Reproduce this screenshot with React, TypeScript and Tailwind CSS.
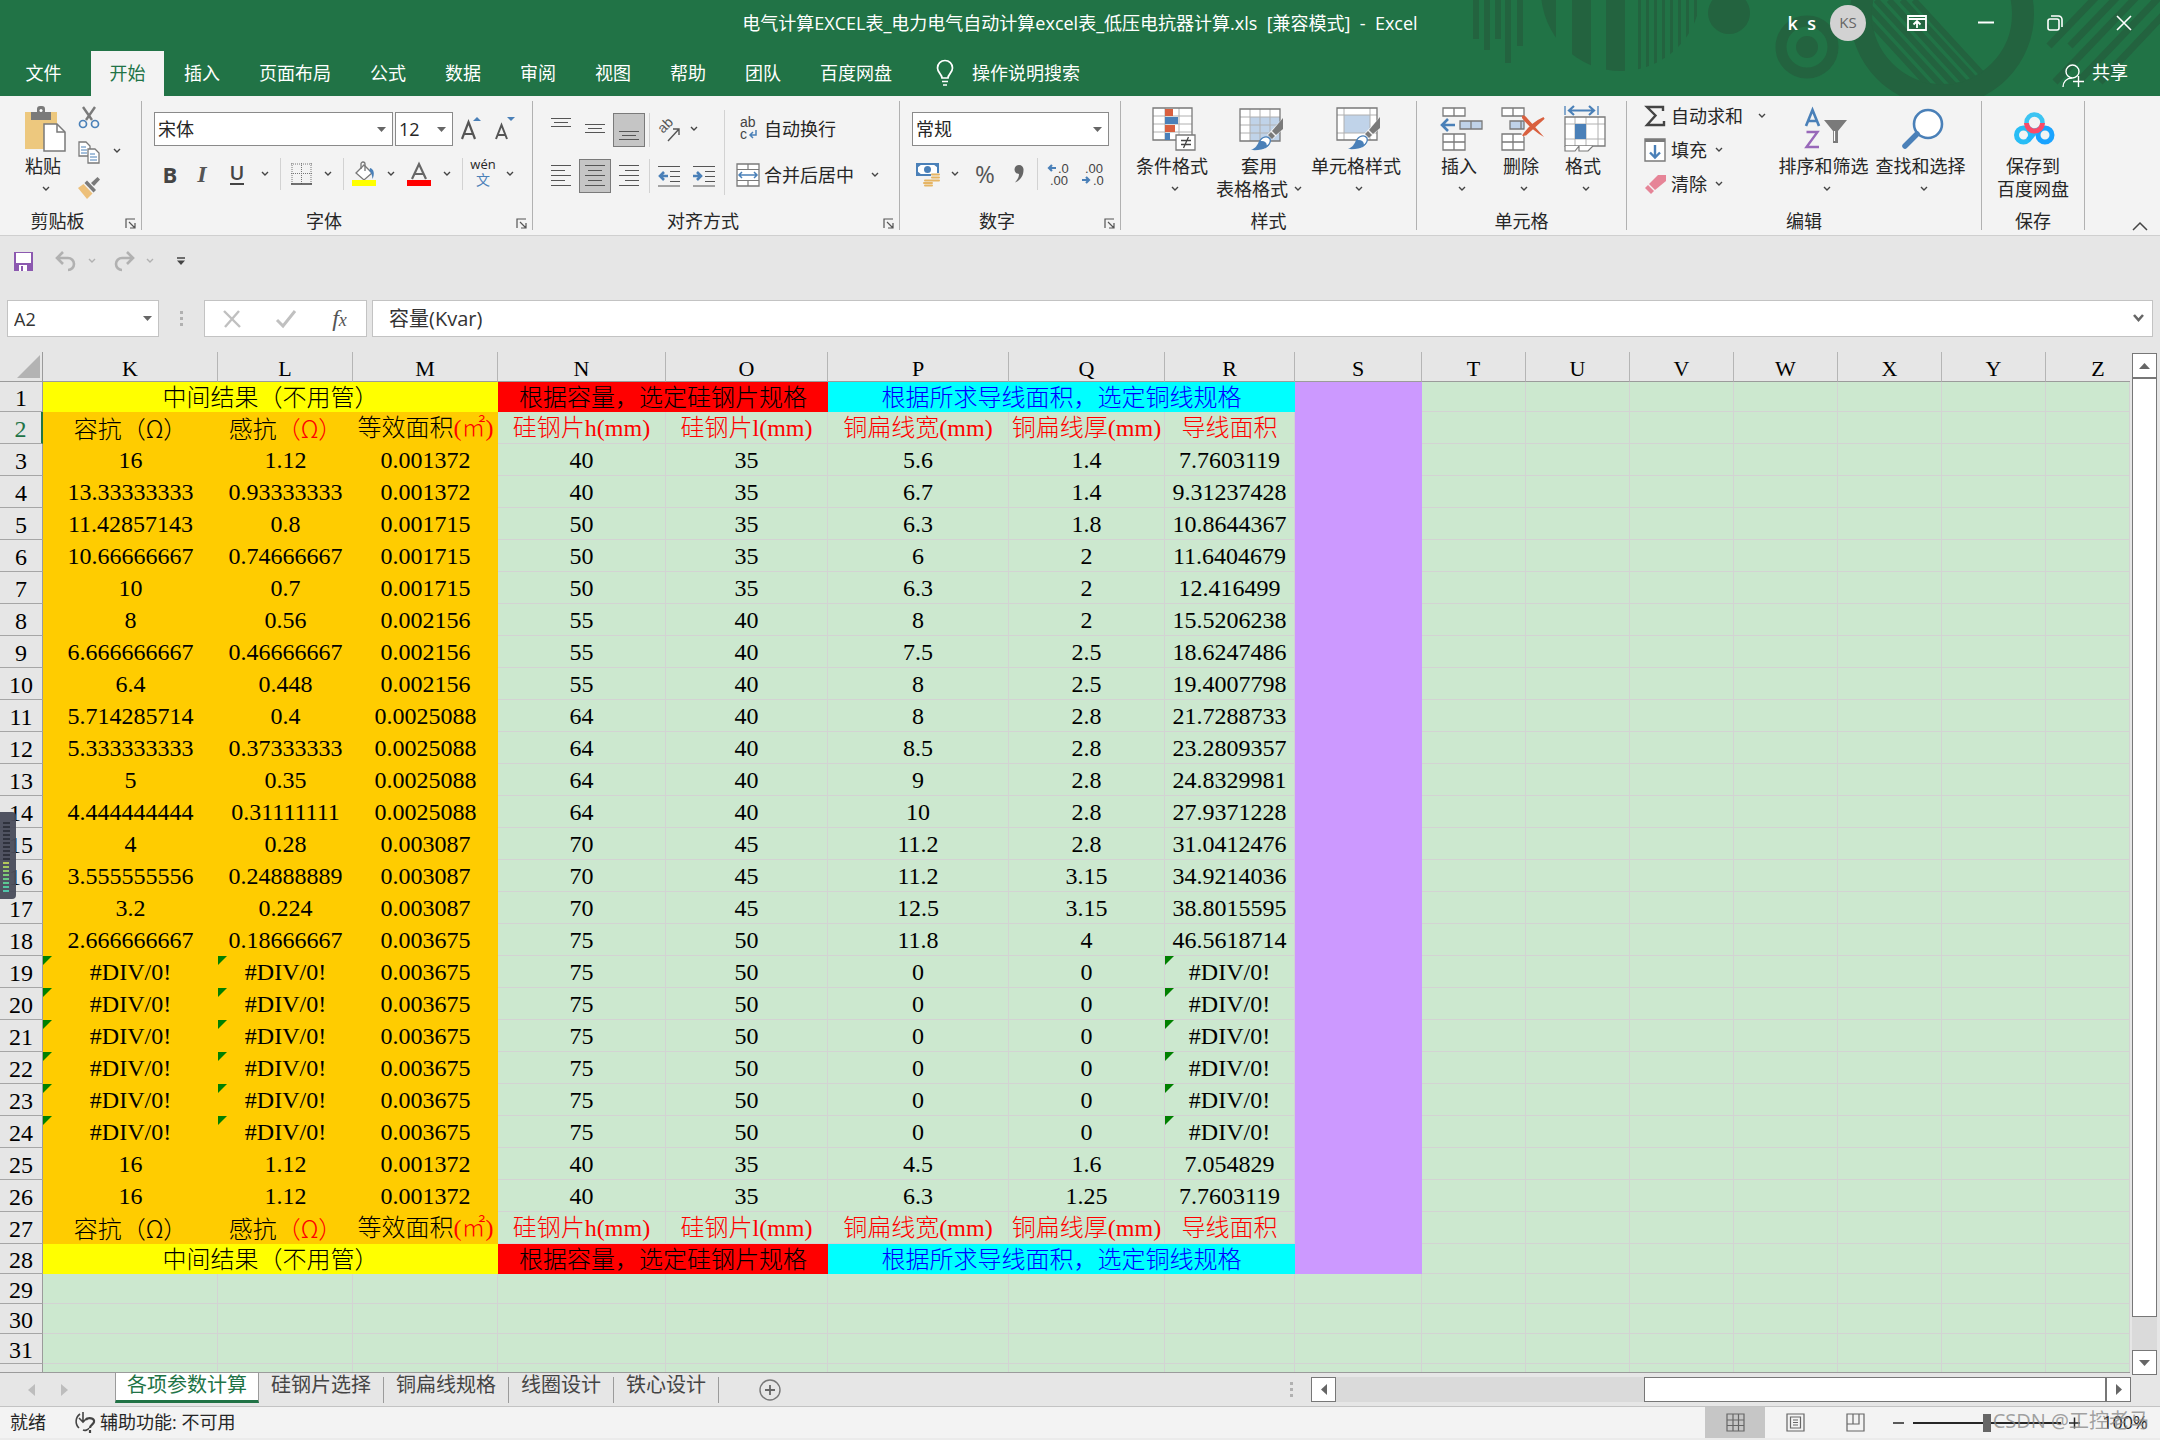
import React from "react";

type Kids = { children?: React.ReactNode };

const UI = "[font-family:'Open_Sans','Noto_Sans_CJK_SC',sans-serif]";
const SERIF = "[font-family:'Liberation_Serif','Noto_Sans_CJK_SC',serif]";
const CJK = "[font-family:'Noto_Sans_CJK_SC',sans-serif]";
const GLYPH = "[font-family:'Liberation_Sans',sans-serif]";

/* ---------- small shared pieces ---------- */

function Svg({ w, h, children, className }: { w: number; h: number; className?: string } & Kids) {
  return (
    <svg width={w} height={h} viewBox={`0 0 ${w} ${h}`} fill="none" aria-hidden="true" className={className ?? "shrink-0 overflow-visible"}>
      {children}
    </svg>
  );
}

function Chevron({ color = "#444" }: { color?: string }) {
  return (
    <Svg w={8} h={6}>
      <path d="M1 1l3 3 3-3" stroke={color} strokeWidth="1.4" />
    </Svg>
  );
}

function ChevronButton({ className = "w-3.5", label, color }: { className?: string; label: string; color?: string }) {
  return (
    <button aria-label={label} className={`flex h-8 shrink-0 items-center justify-center ${className}`}>
      <Chevron color={color} />
    </button>
  );
}

function Caret() {
  return (
    <Svg w={9} h={5} className="pointer-events-none mr-1.5 shrink-0">
      <path d="M0 0h9L4.500 5z" fill="#666" />
    </Svg>
  );
}

function IconButton({ label, className = "w-8", children }: { label: string; className?: string } & Kids) {
  return (
    <button aria-label={label} className={`flex h-full shrink-0 items-center justify-center ${className}`}>
      {children}
    </button>
  );
}

function Rule({ className = "mx-0" }: { className?: string }) {
  return <div className={`h-full w-px shrink-0 bg-[#d2d2d2] ${className}`} />;
}

function Combo({ label, options, className }: { label: string; options: string[]; className: string }) {
  return (
    <div className={`flex h-[34px] shrink-0 items-center border border-[#8a8a8a] bg-white ${className}`}>
      <select aria-label={label} className="h-full min-w-0 flex-1 appearance-none bg-transparent pl-[3px] text-lg leading-7 text-[#262626] outline-none">
        {options.map((o) => (
          <option key={o}>{o}</option>
        ))}
      </select>
      <Caret />
    </div>
  );
}

function Group({ label, className, launcher, children }: { label: string; className: string; launcher?: boolean } & Kids) {
  return (
    <>
      <section aria-label={label} className={`flex shrink-0 flex-col ${className}`}>
        <div className="flex h-28">{children}</div>
        <div className="flex h-[26px] items-center">
          <span className="flex-1 text-center leading-6">{label}</span>
          {launcher && (
            <button aria-label={`${label}设置`} className="flex w-[26px] justify-center pt-1 pl-1">
              <Svg w={11} h={11}>
                <path d="M1 10V1h9M4 4l5.500 5.500M10 5v5H5" stroke="#555" strokeWidth="1.200" />
              </Svg>
            </button>
          )}
        </div>
      </section>
      <div className="my-[5px] w-px shrink-0 bg-[#b1b1b1]" />
    </>
  );
}

function BigButton({ label, second, className, chevron = true, children }: { label: string; second?: string; className: string; chevron?: boolean } & Kids) {
  return (
    <button className={`flex shrink-0 flex-col items-center pt-[9px] ${className}`}>
      <span className="mb-0.5 flex h-12 items-center justify-center pl-1">{children}</span>
      <span className="leading-[23px] whitespace-nowrap">{label}</span>
      <span className={`flex h-[22px] items-center gap-1.5 leading-[22px] whitespace-nowrap ${second ? "" : "pl-1.5"}`}>
        {second}
        {chevron && <Chevron />}
      </span>
    </button>
  );
}

/* ---------- title area ---------- */

function TitleArt() {
  const thin = [1638, 1646, 1654, 1662, 1670, 1678, 1686, 1694];
  return (
    <svg width="700" height="96" viewBox="1460 0 700 96" className="pointer-events-none absolute top-0 right-0" aria-hidden="true">
      <defs>
        <clipPath id="disc">
          <circle cx="1621" cy="-9" r="80" />
        </clipPath>
        <clipPath id="hole">
          <circle cx="1942" cy="14" r="71" />
        </clipPath>
      </defs>
      <g fill="#23633f">
        <path d="M1473 0h6v39h-6zM1484 0h6v50h-6zM1495 0h6v39h-6zM1505 0h6v63h-6zM1517 0h6v46h-6z" />
        <g clipPath="url(#disc)">
          <path d="M1536 0h20v96h-20zM1572 0h19v96h-19zM1606 0h19v96h-19z" />
          {thin.map((x) => (
            <rect key={x} x={x} y="0" width="3" height="96" />
          ))}
        </g>
        <circle cx="1729" cy="13" r="21" />
        <circle cx="1807" cy="47" r="11" />
      </g>
      <g fill="none" stroke="#23633f">
        <circle cx="1807" cy="47" r="26" strokeWidth="11" />
        <circle cx="1942" cy="14" r="81" strokeWidth="22" />
        <g clipPath="url(#hole)" strokeWidth="6">
          <path d="M1850 0l90 98M1863 0l90 98M1876 0l90 98M1889 0l90 98M1902 0l90 98M1914 0l90 98" />
        </g>
        <path d="M2049 46l50-52M2070 46l50-52M2055 82l90-94M2078 82l88-92M2100 82l66-70" strokeWidth="7" />
      </g>
    </svg>
  );
}

const MENU_AFTER = ["插入", "页面布局", "公式", "数据", "审阅", "视图", "帮助", "团队", "百度网盘"];

function Header() {
  return (
    <header className="relative shrink-0 bg-[#217346] text-white">
      <TitleArt />
      <div className="relative grid h-[51px] grid-cols-[1fr_auto_1fr] items-center pb-1.5">
        <div />
        <h1 className="text-lg leading-6 whitespace-pre">电气计算EXCEL表_电力电气自动计算excel表_低压电抗器计算.xls&nbsp; [兼容模式]&nbsp; -&nbsp; Excel</h1>
        <div className="flex items-center justify-end pr-0.5">
          <span className="mr-3.5 text-lg leading-6 font-semibold whitespace-pre">k&nbsp; s</span>
          <button aria-label="帐户" className="mr-4 flex size-9 items-center justify-center rounded-full bg-[#d2d2d2] text-[15px] text-[#666]">KS</button>
          <button aria-label="功能区显示选项" className="flex w-[69px] justify-center">
            <Svg w={20} h={16}>
              <path d="M1 1h18v14H1zM1 4h18M10 13V6M6.500 9.500L10 6l3.500 3.500" stroke="#fff" strokeWidth="1.800" />
            </Svg>
          </button>
          <button aria-label="最小化" className="flex w-[69px] justify-center">
            <Svg w={16} h={16}>
              <path d="M0 7.500h16" stroke="#fff" strokeWidth="2" />
            </Svg>
          </button>
          <button aria-label="还原" className="flex w-[69px] justify-center">
            <Svg w={16} h={16}>
              <rect x="1" y="4" width="11" height="11" rx="2" stroke="#fff" strokeWidth="1.600" />
              <path d="M4 1h7.500a3.500 3.500 0 013.500 3.500V12" stroke="#fff" strokeWidth="1.600" />
            </Svg>
          </button>
          <button aria-label="关闭" className="flex w-[69px] justify-center">
            <Svg w={16} h={16}>
              <path d="M1 1l14 14M15 1L1 15" stroke="#fff" strokeWidth="1.600" />
            </Svg>
          </button>
        </div>
      </div>
      <nav className="relative flex h-[45px] items-stretch gap-px text-lg leading-6">
        <button className="w-[90px] pr-[3px] pb-0.5">文件</button>
        <button className="w-[73px] bg-[#f3f3f3] pb-0.5 text-[#217346]">开始</button>
        {MENU_AFTER.map((m) => (
          <button key={m} className="px-[19px] pb-0.5">{m}</button>
        ))}
        <button className="ml-6 flex items-center gap-[18px] pb-0.5">
          <Svg w={18} h={26}>
            <path d="M6 18c0-4-4.500-5-4.500-10a7.500 7.500 0 0115 0c0 5-4.500 6-4.500 10zM6 21.500h6M7 25h4" stroke="#fff" strokeWidth="1.700" />
          </Svg>
          操作说明搜索
        </button>
        <button className="mr-8 ml-auto flex items-center gap-2 pb-1">
          <Svg w={22} h={24} className="mt-2 shrink-0">
            <circle cx="10.500" cy="7.500" r="6.500" stroke="#fff" strokeWidth="1.400" />
            <path d="M1 23c0-5 3.500-9 9-9M16.500 12v11M11 17.500h11" stroke="#fff" strokeWidth="1.400" />
          </Svg>
          共享
        </button>
      </nav>
    </header>
  );
}

/* ---------- ribbon icons ---------- */

const G = "#7a7a7a";
const B = "#4a80b8";

function PasteIcon() {
  return (
    <Svg w={42} h={46}>
      <path d="M1 6h32v37H1z" fill="#edc87e" />
      <path d="M7 6h6V3a3 3 0 013-3h2a3 3 0 013 3v3h6v8H7z" fill="#7a7a7a" />
      <circle cx="17" cy="4.500" r="1.500" fill="#fff" />
      <path d="M20 18h13l8 8v19H20z" fill="#fff" stroke={G} strokeWidth="1.500" />
      <path d="M33 18v8h8" stroke={G} strokeWidth="1.500" />
    </Svg>
  );
}

function ScissorsIcon() {
  return (
    <Svg w={22} h={23}>
      <path d="M5 1l9 13M17 1L8 14" stroke={G} strokeWidth="2.400" />
      <circle cx="5" cy="18" r="3.500" stroke={B} strokeWidth="1.700" />
      <circle cx="17" cy="18" r="3.500" stroke={B} strokeWidth="1.700" />
    </Svg>
  );
}

function CopyIcon() {
  return (
    <Svg w={22} h={23}>
      <path d="M1 1h7l4 4v10H1z" fill="#fff" stroke={G} strokeWidth="1.300" />
      <path d="M3 6h5M3 9h6M3 12h6" stroke={B} />
      <path d="M10 8h7l4 4v10H10z" fill="#fff" stroke={G} strokeWidth="1.300" />
      <path d="M12 13h5M12 16h7M12 19h7" stroke={B} />
    </Svg>
  );
}

function PainterIcon() {
  return (
    <Svg w={24} h={22}>
      <path d="M23 2.500L20.500 0 14 6l3 3z" fill={G} />
      <path d="M10 3.500l9 9.500-2.500 2.500L7.500 6z" fill={G} />
      <path d="M6.500 7l9 9.500L10 22 1 11z" fill="#edc07a" />
    </Svg>
  );
}

function Lines({ rows, w = 22, h = 24 }: { rows: [number, number, number][]; w?: number; h?: number }) {
  return (
    <Svg w={w} h={h}>
      {rows.map(([x, y, len], i) => (
        <rect key={i} x={x} y={y} width={len} height="1" fill="#555" />
      ))}
    </Svg>
  );
}

function BrushTip({ x, y }: { x: number; y: number }) {
  return (
    <g transform={`translate(${x} ${y})`}>
      <path d="M33 -1v11L22 21l-6-4z" fill="#f3f3f3" />
      <path d="M32 0v11l-7 6-4-4z" fill="#7a7a7a" />
      <path d="M20 14l4 4-3 3-4-4z" fill="#7a7a7a" />
      <path d="M0 32c5-2 6-5 8-8 2.500-5 9-5 10.500-1C20 29 12 33 0 32z" fill={B} />
      <path d="M8.500 24c2-5.500 8-6.500 10.500-3 1 3-1 6-4 8 1-4-2-6-6.500-5z" fill="#fff" stroke={B} strokeWidth="1.300" />
    </g>
  );
}

function ConditionalIcon() {
  return (
    <Svg w={44} h={44}>
      <path d="M1 1h39v32H1z" fill="#fff" />
      <path d="M1 9h39M1 17h39M1 25h39M13 1v32M27 1v32" stroke="#b0b0b0" />
      <path d="M1 1h39v32H1z" stroke={G} strokeWidth="1.300" />
      <path d="M13 2h8v7h-8zM13 18h10v7H13z" fill="#d9603f" />
      <path d="M13 10h13v7H13zM13 26h5v7h-5z" fill={B} />
      <path d="M24 28h19v15H24z" fill="#fff" stroke={G} strokeWidth="1.300" />
      <path d="M29 33.500h10M29 37.500h10M36.500 30l-5 11" stroke="#444" strokeWidth="1.300" />
    </Svg>
  );
}

function TableStyleIcon() {
  return (
    <Svg w={45} h={44}>
      <path d="M1 2h40v32H1z" fill="#fff" />
      <path d="M11 10h30v24H11z" fill="#c0d3e9" />
      <path d="M1 10h40M1 18h40M1 26h40M11 2v32M21 2v32M31 2v32" stroke="#b0b0b0" />
      <path d="M1 2h40v32H1z" stroke={G} strokeWidth="1.300" />
      <BrushTip x={12} y={11} />
    </Svg>
  );
}

function CellStyleIcon() {
  return (
    <Svg w={45} h={44}>
      <path d="M1 1h40v32H1z" fill="#fff" />
      <path d="M8 8h26v18H8z" fill="#c0d3e9" />
      <path d="M1 8h40M1 26h40M8 1v32M34 1v32" stroke="#b0b0b0" />
      <path d="M1 1h40v32H1z" stroke={G} strokeWidth="1.300" />
      <BrushTip x={12} y={10} />
    </Svg>
  );
}

function InsertIcon() {
  return (
    <Svg w={44} h={44}>
      <path d="M4 1h22v8H4zM15 1v8M4 27h22v16H4zM15 27v16M4 35h22" fill="#fff" stroke={G} strokeWidth="1.300" />
      <path d="M21 14h22v8H21zM32 14v8" fill="#c0d3e9" stroke={G} strokeWidth="1.300" />
      <path d="M16 18H3M9 12l-6 6 6 6" stroke={B} strokeWidth="2.600" />
    </Svg>
  );
}

function DeleteIcon() {
  return (
    <Svg w={44} h={44}>
      <path d="M1 1h22v8H1zM12 1v8M1 27h22v16H1zM12 27v16M1 35h22" fill="#fff" stroke={G} strokeWidth="1.300" />
      <path d="M9 14h14v8H9zM20 14v8" fill="#c0d3e9" stroke={G} strokeWidth="1.300" />
      <path d="M21 9l6 1 6 6 9-6-6 9 7 11-10-8-8 9-5-4 7-8z" fill="#f3f3f3" />
      <path d="M21 9c2-1 4 0 5 2l17 19C36 26 27 19 21 11z" fill="#d9603f" />
      <path d="M43 11C34 15 28 20 22 29M24 28L43 11" stroke="#d9603f" strokeWidth="2.200" />
    </Svg>
  );
}

function FormatIcon() {
  return (
    <Svg w={42} h={46}>
      <path d="M1 0v9M34 0v9" stroke={B} strokeWidth="1.300" />
      <path d="M6 4.500h23M10 0L5 4.500 10 9M25 0l5 4.500L25 9" stroke={B} strokeWidth="2.200" />
      <path d="M1 11h40v29H1z" fill="#fff" />
      <path d="M1 18h40M1 33h40M11 11v29M22 11v29M34 11v29" stroke="#b0b0b0" />
      <path d="M11 18h11v15H11z" fill={B} />
      <path d="M1 11h40v29H1z" stroke={G} strokeWidth="1.300" />
      <path d="M1 40v5h10l4-5M15 40v5h9l5-5" stroke={G} strokeWidth="1.200" fill="#fff" />
    </Svg>
  );
}

function SortIcon() {
  return (
    <Svg w={44} h={44}>
      <path d="M2 19L8.500 3 15 19M4.500 14h8" stroke={B} strokeWidth="2.600" />
      <path d="M2.500 25h11L2.500 40H15" stroke="#9868b9" strokeWidth="2.400" />
      <path d="M20 13h23L34 24v12h-5V24z" fill={G} />
      <path d="M30.500 24v10" stroke="#fff" strokeWidth="1.200" />
    </Svg>
  );
}

function FindIcon() {
  return (
    <Svg w={42} h={42}>
      <circle cx="26" cy="16" r="14" fill="#fff" stroke={B} strokeWidth="2.600" />
      <path d="M15 26L3 38" stroke={B} strokeWidth="5.500" strokeLinecap="round" />
    </Svg>
  );
}

function CloudDiskIcon() {
  return (
    <Svg w={42} h={36}>
      <circle cx="9.500" cy="24" r="7" stroke="#28bdf5" strokeWidth="5" />
      <circle cx="31" cy="24" r="7" stroke="#1aa3ff" strokeWidth="5" />
      <path d="M14 29c5-4 6-9 12-11" stroke="#22b4fa" strokeWidth="5" />
      <circle cx="20.500" cy="11.500" r="8" fill="#f3f3f3" stroke="#3cc4f2" strokeWidth="4.500" />
      <path d="M12.500 12a8 8 0 0016 0" stroke="#fb4a68" strokeWidth="5" />
    </Svg>
  );
}

/* ---------- ribbon ---------- */

function ClipboardGroup() {
  return (
    <Group label="剪贴板" className="w-[141px]" launcher>
      <BigButton label="粘贴" className="ml-3 w-[62px]">
        <PasteIcon />
      </BigButton>
      <div className="flex flex-col pt-1 pl-[3px]">
        <div className="flex h-[35px]">
          <IconButton label="剪切" className="w-6"><ScissorsIcon /></IconButton>
        </div>
        <div className="flex h-[35px] gap-[9px]">
          <IconButton label="复制" className="w-6"><CopyIcon /></IconButton>
          <ChevronButton label="复制选项" />
        </div>
        <div className="flex h-[35px]">
          <IconButton label="格式刷" className="w-6"><PainterIcon /></IconButton>
        </div>
      </div>
    </Group>
  );
}

function FontGroup() {
  return (
    <Group label="字体" className="w-[390px]" launcher>
      <div className="flex flex-col gap-3 pt-4 pl-3">
        <div className="flex h-[34px]">
          <Combo label="字体名称" options={["宋体", "黑体"]} className="mr-0.5 w-[239px]" />
          <Combo label="字号" options={["12", "14"]} className="mr-px w-[58px]" />
          <IconButton label="增大字号" className="w-[34px]">
            <Svg w={20} h={24}>
              <path d="M1 22L7.500 5 14 22M3.500 17h8" stroke="#555" strokeWidth="2.200" />
              <path d="M12 4l4-4 4 4z" fill={B} />
            </Svg>
          </IconButton>
          <IconButton label="减小字号" className="w-[34px]">
            <Svg w={20} h={24}>
              <path d="M1 22L6.500 8 12 22M3 18h7" stroke="#555" strokeWidth="2" />
              <path d="M12 0h8l-4 4z" fill={B} />
            </Svg>
          </IconButton>
        </div>
        <div className="flex h-8">
          <IconButton label="加粗"><b className="text-[22px] leading-7 text-[#444]">B</b></IconButton>
          <IconButton label="倾斜"><i className={`text-2xl leading-7 font-bold text-[#555] ${SERIF}`}>I</i></IconButton>
          <IconButton label="下划线" className="w-[38px]"><span className="border-b-2 border-[#444] text-xl leading-5 font-semibold text-[#444]">U</span></IconButton>
          <ChevronButton label="下划线选项" className="mr-1.5 w-[18px]" />
          <Rule />
          <IconButton label="边框" className="w-10">
            <Svg w={21} h={22}>
              <path d="M0 1h21M0 10.500h21M1 0v21M10.500 0v21M20 0v21" stroke="#777" strokeDasharray="1 1" />
              <path d="M0 21h21" stroke="#444" strokeWidth="1.500" />
            </Svg>
          </IconButton>
          <ChevronButton label="边框选项" className="mr-2 w-3.5" />
          <Rule />
          <IconButton label="填充颜色" className="w-10">
            <Svg w={24} h={24}>
              <path d="M4 11l8-8 8 8-8 7z" fill="#fff" stroke="#777" strokeWidth="1.300" />
              <path d="M9 7V2a2 2 0 014 0v7" stroke="#777" strokeWidth="1.300" />
              <path d="M18 6c4 1 5 6 2.500 11-.5-4-1-6-3-8z" fill={B} />
              <path d="M0 18h24v6H0z" fill="#ff0" />
            </Svg>
          </IconButton>
          <ChevronButton label="填充颜色选项" />
          <IconButton label="字体颜色" className="w-[42px]">
            <Svg w={24} h={24}>
              <path d="M5 17L12 2l7 15M8 12h8" stroke="#666" strokeWidth="2.200" />
              <path d="M0 18h24v6H0z" fill="red" />
            </Svg>
          </IconButton>
          <ChevronButton label="字体颜色选项" className="mr-2 w-3.5" />
          <Rule />
          <button aria-label="拼音" className="flex w-10 flex-col items-center justify-center">
            <span className="text-[13px] leading-3">wén</span>
            <span className="text-sm leading-5 text-[#4a80b8]">文</span>
          </button>
          <ChevronButton label="拼音选项" />
        </div>
      </div>
    </Group>
  );
}

function AlignGroup() {
  const on = "w-8 border border-[#7a7a7a] bg-[#c5c5c5]";
  return (
    <Group label="对齐方式" className="w-[366px]" launcher>
      <div className="flex flex-col gap-3 pt-[17px] pl-3">
        <div className="flex h-[34px] gap-0.5">
          <IconButton label="顶端对齐"><Lines rows={[[1, 0, 20], [4, 4, 14], [1, 8, 20]]} h={24} /></IconButton>
          <IconButton label="垂直居中"><Lines rows={[[1, 6, 20], [4, 10, 14], [1, 14, 20]]} h={24} /></IconButton>
          <IconButton label="底端对齐" className={on}><Lines rows={[[1, 13, 20], [4, 17, 14], [1, 21, 20]]} h={24} /></IconButton>
          <Rule className="ml-0.5" />
          <IconButton label="方向" className="w-9">
            <Svg w={22} h={22}>
              <text x="4" y="15" transform="rotate(-45 4 15)" fontSize="14" fill="#555" className={GLYPH}>ab</text>
              <path d="M9 22L20 10M14 10h6v6" stroke="#555" strokeWidth="1.400" />
            </Svg>
          </IconButton>
          <ChevronButton label="方向选项" className="w-2" />
        </div>
        <div className="flex h-[34px] gap-0.5">
          <IconButton label="左对齐"><Lines rows={[[1, 1, 20], [1, 6, 14], [1, 11, 20], [1, 16, 14], [1, 21, 20]]} /></IconButton>
          <IconButton label="居中" className={on}><Lines rows={[[1, 1, 20], [4, 6, 14], [1, 11, 20], [4, 16, 14], [1, 21, 20]]} /></IconButton>
          <IconButton label="右对齐"><Lines rows={[[1, 1, 20], [7, 6, 14], [1, 11, 20], [7, 16, 14], [1, 21, 20]]} /></IconButton>
          <Rule className="ml-0.5" />
          <IconButton label="减少缩进量" className="w-[34px]">
            <Svg w={22} h={22}>
              <path d="M0 1.500h22M12 6.500h10M12 11.500h10M12 16.500h10M0 21h22" stroke="#555" />
              <path d="M10 11H2M6 7l-4 4 4 4" stroke={B} strokeWidth="2.600" />
            </Svg>
          </IconButton>
          <IconButton label="增加缩进量" className="w-8">
            <Svg w={22} h={22}>
              <path d="M0 1.500h22M12 6.500h10M12 11.500h10M12 16.500h10M0 21h22" stroke="#555" />
              <path d="M0 11h8M4 7l4 4-4 4" stroke={B} strokeWidth="2.600" />
            </Svg>
          </IconButton>
        </div>
      </div>
      <div className="mt-3.5 mr-2 ml-1 h-[85px] w-px bg-[#d2d2d2]" />
      <div className="flex flex-col gap-3 pt-4">
        <button className="flex h-[34px] items-center gap-[3px] whitespace-nowrap">
          <Svg w={28} h={24}>
            <text x="7" y="10" fontSize="14" fill="#444" className={GLYPH}>ab</text>
            <text x="7" y="22" fontSize="14" fill="#444" className={GLYPH}>c</text>
            <path d="M23 13v5h-6M20 15l-3 3 3 3" stroke={B} strokeWidth="1.500" />
          </Svg>
          自动换行
        </button>
        <div className="flex h-[34px] items-center">
          <button className="mr-3.5 flex items-center gap-[3px] whitespace-nowrap">
            <Svg w={28} h={24}>
              <path d="M4 1h22v22H4z" fill="#fff" stroke={G} strokeWidth="1.300" />
              <path d="M4 6.500h22M4 17.500h22M15 1v5M15 18v5" stroke={G} strokeWidth="1.200" />
              <path d="M6 12h18M9 9l-3 3 3 3M21 9l3 3-3 3" stroke={B} strokeWidth="1.500" />
            </Svg>
            合并后居中
          </button>
          <ChevronButton label="合并选项" />
        </div>
      </div>
    </Group>
  );
}

function NumberGroup() {
  return (
    <Group label="数字" className="w-[220px]" launcher>
      <div className="flex flex-col gap-3 pt-4 pl-3">
        <Combo label="数字格式" options={["常规", "数值"]} className="w-[197px]" />
        <div className="flex h-8">
          <IconButton label="会计数字格式">
            <Svg w={24} h={24}>
              <path d="M1 2h21v11H1z" fill="#fff" stroke={B} strokeWidth="2" />
              <path d="M1 2h5L1 6zM22 2h-5l5 4zM1 13h5l-5-4z" fill={B} />
              <circle cx="11.500" cy="7.500" r="3.500" fill={B} />
              <path d="M15 11h9v9h-6v4H8v-6h7z" fill="#f3f3f3" />
              <path d="M16 12.500h7M16 15.500h7M15 18.500h8M9 18.500h8M8 21h8M9 23.500h7" stroke="#e6b564" strokeWidth="2" strokeLinecap="round" />
            </Svg>
          </IconButton>
          <ChevronButton label="会计数字格式选项" className="w-[22px]" />
          <IconButton label="百分比样式" className="w-[38px]"><span className="text-2xl leading-7 text-[#555]">%</span></IconButton>
          <IconButton label="千位分隔样式" className="w-[29px]">
            <Svg w={10} h={18}>
              <path d="M5 0a4.500 4.500 0 014.500 5C9.500 11 6 15.500 1 17.500c2.500-3 4-5 4-8.500a4.500 4.500 0 010-9z" fill="#666" />
            </Svg>
          </IconButton>
          <Rule className="ml-1" />
          <IconButton label="增加小数位数" className="w-10">
            <Svg w={24} h={24}>
              <text x="12" y="11" fontSize="13" fill="#444" className={GLYPH}>.0</text>
              <text x="4" y="23" fontSize="13" fill="#444" className={GLYPH}>.00</text>
              <path d="M10 6H3M6 3L3 6l3 3" stroke={B} strokeWidth="2.200" />
            </Svg>
          </IconButton>
          <IconButton label="减少小数位数" className="w-[30px]">
            <Svg w={24} h={24}>
              <text x="4" y="11" fontSize="13" fill="#444" className={GLYPH}>.00</text>
              <text x="12" y="23" fontSize="13" fill="#444" className={GLYPH}>.0</text>
              <path d="M1 18h7M5 15l3 3-3 3" stroke={B} strokeWidth="2.200" />
            </Svg>
          </IconButton>
        </div>
      </div>
    </Group>
  );
}

function EditGroup() {
  return (
    <Group label="编辑" className="w-[354px]">
      <div className="flex w-[148px] flex-col pt-[3px] pl-3.5">
        <div className="flex h-[34px] items-center">
          <button className="mr-3 flex items-center gap-0.5 whitespace-nowrap">
            <Svg w={28} h={24}>
              <path d="M22 7V3H6l8.500 8.500L6 21h17v-4" stroke="#444" strokeWidth="2.400" />
            </Svg>
            自动求和
          </button>
          <ChevronButton label="求和选项" />
        </div>
        <button className="flex h-[34px] items-center gap-0.5 whitespace-nowrap">
          <Svg w={28} h={24}>
            <path d="M4 1h20v22H4z" fill="#fff" stroke={G} strokeWidth="1.400" />
            <path d="M4 1h20v3H4z" fill={G} />
            <path d="M14 7v13M9 14.500l5 5 5-5" stroke={B} strokeWidth="2.400" />
          </Svg>
          <span className="mr-1.5">填充</span>
          <Chevron />
        </button>
        <button className="flex h-[34px] items-center gap-0.5 whitespace-nowrap">
          <Svg w={28} h={24}>
            <path d="M17 3l8 0v6L14 18l-6-6z" fill="#e68497" />
            <path d="M7 13l6 6-3 3-6-6z" fill="#e68497" />
          </Svg>
          <span className="mr-1.5">清除</span>
          <Chevron />
        </button>
      </div>
      <BigButton label="排序和筛选" className="w-[97px]"><SortIcon /></BigButton>
      <BigButton label="查找和选择" className="w-[97px]"><FindIcon /></BigButton>
    </Group>
  );
}

function Ribbon() {
  return (
    <div className="flex h-[140px] shrink-0 border-b border-[#cfcfcf] bg-[#f3f3f3] text-lg leading-6 text-[#262626]">
      <ClipboardGroup />
      <FontGroup />
      <AlignGroup />
      <NumberGroup />
      <Group label="样式" className="w-[295px]">
        <BigButton label="条件格式" className="ml-[9px] w-[84px]"><ConditionalIcon /></BigButton>
        <BigButton label="套用" second="表格格式" className="w-[90px]"><TableStyleIcon /></BigButton>
        <BigButton label="单元格样式" className="w-[104px]"><CellStyleIcon /></BigButton>
      </Group>
      <Group label="单元格" className="w-[209px]">
        <BigButton label="插入" className="ml-[11px] w-[62px]"><InsertIcon /></BigButton>
        <BigButton label="删除" className="w-[62px]"><DeleteIcon /></BigButton>
        <BigButton label="格式" className="w-[62px]"><FormatIcon /></BigButton>
      </Group>
      <EditGroup />
      <Group label="保存" className="w-[102px]">
        <BigButton label="保存到" second="百度网盘" className="w-full" chevron={false}><CloudDiskIcon /></BigButton>
      </Group>
      <button aria-label="折叠功能区" className="mt-auto mr-3 mb-1 ml-auto">
        <Svg w={16} h={9}>
          <path d="M1 8l7-7 7 7" stroke="#444" strokeWidth="1.500" />
        </Svg>
      </button>
    </div>
  );
}

/* ---------- quick access and formula bar ---------- */

function QuickAccess() {
  return (
    <div className="flex h-[50px] shrink-0 items-center pl-3.5">
      <button aria-label="保存">
        <Svg w={19} h={19}>
          <path d="M0 0h19v19H0z" fill="#8c59b0" />
          <path d="M2 1h15v10H2zM5 13h8v6H5z" fill="#fff" />
          <path d="M7 14h2v5H7z" fill="#8c59b0" />
        </Svg>
      </button>
      <button aria-label="撤消" className="ml-[22px]">
        <Svg w={22} h={20}>
          <path d="M2 7h11a6 6 0 010 12M8 1L2 7l6 6" stroke="#b1b1b1" strokeWidth="2.600" />
        </Svg>
      </button>
      <ChevronButton label="撤消选项" className="ml-2 w-3.5" color="#b1b1b1" />
      <button aria-label="恢复" className="ml-3.5">
        <Svg w={22} h={20}>
          <path d="M20 7H9a6 6 0 000 12M14 1l6 6-6 6" stroke="#b1b1b1" strokeWidth="2.600" />
        </Svg>
      </button>
      <ChevronButton label="恢复选项" className="ml-2 w-3.5" color="#b1b1b1" />
      <button aria-label="自定义快速访问工具栏" className="ml-5">
        <Svg w={8} h={8}>
          <path d="M0 1h8" stroke="#444" strokeWidth="1.500" />
          <path d="M0 3.500h8L4 8z" fill="#444" />
        </Svg>
      </button>
    </div>
  );
}

function FormulaBar() {
  return (
    <div className="mt-3.5 flex h-[37px] shrink-0 pr-[7px] pl-[7px]">
      <div className="flex w-[152px] items-center border border-[#c3c3c3] bg-white">
        <input aria-label="名称框" defaultValue="A2" className="min-w-0 flex-1 bg-transparent pl-1.5 text-lg text-[#333] outline-none" />
        <Caret />
      </div>
      <div className="flex w-[45px] items-center justify-center">
        <Svg w={3} h={16}>
          <path d="M0 0h3v3H0zM0 6h3v3H0zM0 12h3v3H0z" fill="#b1b1b1" />
        </Svg>
      </div>
      <div className="mr-[5px] flex w-[163px] items-center border border-[#c3c3c3] bg-white">
        <IconButton label="取消" className="w-[54px]">
          <Svg w={18} h={18}>
            <path d="M1 1l16 16M16 1L2 17" stroke="#c0c0c0" strokeWidth="2.400" />
          </Svg>
        </IconButton>
        <IconButton label="输入" className="w-[54px]">
          <Svg w={20} h={18}>
            <path d="M1 10l6 6L19 1" stroke="#c0c0c0" strokeWidth="3" />
          </Svg>
        </IconButton>
        <IconButton label="插入函数" className="w-[53px]">
          <i className={`text-2xl leading-7 text-[#555] ${SERIF}`}>f<span className="text-lg">x</span></i>
        </IconButton>
      </div>
      <div className="flex flex-1 items-center border border-[#c3c3c3] bg-white">
        <input aria-label="编辑栏" defaultValue="容量(Kvar)" className="min-w-0 flex-1 bg-transparent pl-4 text-xl text-[#333] outline-none" />
        <button aria-label="展开编辑栏" className="mr-2">
          <Svg w={11} h={9}>
            <path d="M1 1l4.500 5L10 1" stroke="#666" strokeWidth="2.600" />
          </Svg>
        </button>
      </div>
    </div>
  );
}

/* ---------- sheet ---------- */

const DIV = "#DIV/0!";

const DATA: string[][] = [
  ["16", "1.12", "0.001372", "40", "35", "5.6", "1.4", "7.7603119"],
  ["13.33333333", "0.93333333", "0.001372", "40", "35", "6.7", "1.4", "9.31237428"],
  ["11.42857143", "0.8", "0.001715", "50", "35", "6.3", "1.8", "10.8644367"],
  ["10.66666667", "0.74666667", "0.001715", "50", "35", "6", "2", "11.6404679"],
  ["10", "0.7", "0.001715", "50", "35", "6.3", "2", "12.416499"],
  ["8", "0.56", "0.002156", "55", "40", "8", "2", "15.5206238"],
  ["6.666666667", "0.46666667", "0.002156", "55", "40", "7.5", "2.5", "18.6247486"],
  ["6.4", "0.448", "0.002156", "55", "40", "8", "2.5", "19.4007798"],
  ["5.714285714", "0.4", "0.0025088", "64", "40", "8", "2.8", "21.7288733"],
  ["5.333333333", "0.37333333", "0.0025088", "64", "40", "8.5", "2.8", "23.2809357"],
  ["5", "0.35", "0.0025088", "64", "40", "9", "2.8", "24.8329981"],
  ["4.444444444", "0.31111111", "0.0025088", "64", "40", "10", "2.8", "27.9371228"],
  ["4", "0.28", "0.003087", "70", "45", "11.2", "2.8", "31.0412476"],
  ["3.555555556", "0.24888889", "0.003087", "70", "45", "11.2", "3.15", "34.9214036"],
  ["3.2", "0.224", "0.003087", "70", "45", "12.5", "3.15", "38.8015595"],
  ["2.666666667", "0.18666667", "0.003675", "75", "50", "11.8", "4", "46.5618714"],
  [DIV, DIV, "0.003675", "75", "50", "0", "0", DIV],
  [DIV, DIV, "0.003675", "75", "50", "0", "0", DIV],
  [DIV, DIV, "0.003675", "75", "50", "0", "0", DIV],
  [DIV, DIV, "0.003675", "75", "50", "0", "0", DIV],
  [DIV, DIV, "0.003675", "75", "50", "0", "0", DIV],
  [DIV, DIV, "0.003675", "75", "50", "0", "0", DIV],
  ["16", "1.12", "0.001372", "40", "35", "4.5", "1.6", "7.054829"],
  ["16", "1.12", "0.001372", "40", "35", "6.3", "1.25", "7.7603119"],
];

const COLUMNS = ["K", "L", "M", "N", "O", "P", "Q", "R", "S", "T", "U", "V", "W", "X", "Y"];
const COL_WIDTHS = [
  "w-[175px]", "w-[135px]", "w-[145px]", "w-[168px]", "w-[162px]", "w-[181px]", "w-[156px]", "w-[130px]",
  "w-[127px]", "w-[104px]", "w-[104px]", "w-[104px]", "w-[104px]", "w-[104px]", "w-[104px]",
];

const LINE = "border-r border-b border-[#d3d3d3]";

function RowHead({ n }: { n: number }) {
  return (
    <th
      scope="row"
      className={`border-b border-b-[#a6a6a6] bg-[#e6e6e6] p-0 pt-0.5 text-center font-normal ${n === 2 ? "border-r-2 border-r-[#217346] text-[#217346]" : "border-r border-r-[#9b9b9b]"}`}
    >
      {n}
    </th>
  );
}

function Blank({ count }: { count: number }) {
  return (
    <>
      {Array.from({ length: count }, (_, i) => (
        <td key={i} className={LINE} />
      ))}
    </>
  );
}

function BannerRow({ n }: { n: number }) {
  return (
    <tr className="h-[30px]">
      <RowHead n={n} />
      <td colSpan={3} className="bg-[#ff0] p-0 pt-0.5 font-light">中间结果（不用管）</td>
      <td colSpan={2} className="bg-[#f00] p-0 pt-0.5 font-light">根据容量，选定硅钢片规格</td>
      <td colSpan={3} className="bg-[#0ff] p-0 pt-0.5 font-light text-[#00f]">根据所求导线面积，选定铜线规格</td>
      <td className="bg-[#c9f] p-0" />
      <Blank count={7} />
    </tr>
  );
}

function TitleRow({ n }: { n: number }) {
  const red = `${LINE} p-0 font-light text-[#f00]`;
  return (
    <tr className="h-8">
      <RowHead n={n} />
      <td className={`bg-[#fc0] p-0 font-light ${CJK}`}>容抗（Ω）</td>
      <td className={`bg-[#fc0] p-0 font-light ${CJK}`}>感抗<span className="text-[#f00]">（Ω）</span></td>
      <td className="bg-[#fc0] p-0 font-light">等效面积<span className="text-[#f00]">(㎡)</span></td>
      <td className={red}>硅钢片h(mm)</td>
      <td className={red}>硅钢片l(mm)</td>
      <td className={red}>铜扁线宽(mm)</td>
      <td className={red}>铜扁线厚(mm)</td>
      <td className={red}>导线面积</td>
      <td className="bg-[#c9f] p-0" />
      <Blank count={7} />
    </tr>
  );
}

function Sheet() {
  return (
    <div className="mt-[15px] flex min-h-0 flex-1">
      <div className="min-w-0 flex-1 overflow-hidden border-b border-[#9b9b9b]">
        <table className={`w-full table-fixed border-separate border-spacing-0 bg-[#cce8cf] text-center text-2xl leading-6 whitespace-nowrap text-black ${SERIF}`}>
          <colgroup>
            <col className="w-[43px]" />
            {COL_WIDTHS.map((w, i) => (
              <col key={i} className={w} />
            ))}
            <col />
          </colgroup>
          <thead>
            <tr className="h-[30px] bg-[#e6e6e6] text-[22px]">
              <th className="border-r border-b border-[#9b9b9b] p-0">
                <Svg w={23} h={23} className="ml-auto mr-0.5">
                  <path d="M23 0v23H0z" fill="#b3b3b3" />
                </Svg>
              </th>
              {COLUMNS.map((c) => (
                <th key={c} scope="col" className="border-r border-b border-r-[#b5b5b5] border-b-[#9b9b9b] p-0 pt-1 font-normal">{c}</th>
              ))}
              <th scope="col" className="border-b border-b-[#9b9b9b] p-0 pt-1 pl-5 font-normal">Z</th>
            </tr>
          </thead>
          <tbody>
            <BannerRow n={1} />
            <TitleRow n={2} />
            {DATA.map((row, r) => (
              <tr key={r} className="h-8">
                <RowHead n={r + 3} />
                {row.map((v, c) => (
                  <td key={c} className={`relative p-0 ${c < 3 ? "bg-[#fc0]" : LINE}`}>
                    {v === DIV && <span className="absolute top-0 left-0 size-[9px] bg-[#008000] [clip-path:polygon(0_0,100%_0,0_100%)]" />}
                    {v}
                  </td>
                ))}
                <td className="bg-[#c9f] p-0" />
                <Blank count={7} />
              </tr>
            ))}
            <TitleRow n={27} />
            <BannerRow n={28} />
            {[29, 30, 31].map((n) => (
              <tr key={n} className="h-[30px]">
                <RowHead n={n} />
                <Blank count={16} />
              </tr>
            ))}
            <tr className="h-[30px]">
              <th className="border-r border-r-[#9b9b9b] bg-[#e6e6e6]" />
              <Blank count={16} />
            </tr>
          </tbody>
        </table>
      </div>
      <div className="mt-px -mb-0.5 mr-[3px] ml-[2px] flex w-[25px] shrink-0 flex-col bg-[#dadada]">
        <button aria-label="向上滚动" className="flex h-[25px] shrink-0 items-center justify-center border border-[#777] bg-white">
          <Svg w={11} h={6}><path d="M0 6h11L5.500 0z" fill="#666" /></Svg>
        </button>
        <div className="mb-[33px] flex-1 border border-[#777] bg-white" />
        <button aria-label="向下滚动" className="flex h-[25px] shrink-0 items-center justify-center border border-[#777] bg-white">
          <Svg w={11} h={6}><path d="M0 0h11L5.500 6z" fill="#666" /></Svg>
        </button>
      </div>
    </div>
  );
}

/* ---------- bottom bars ---------- */

const TABS = ["硅钢片选择", "铜扁线规格", "线圈设计", "铁心设计"];

function SheetTabs() {
  return (
    <div className="flex h-[34px] shrink-0 border-b border-[#c3c3c3] text-xl leading-6 text-[#444]">
      <div className="flex w-[115px] items-center gap-[26px] pl-7">
        <button aria-label="上一个工作表"><Svg w={7} h={12}><path d="M7 0v12L0 6z" fill="#bdbdbd" /></Svg></button>
        <button aria-label="下一个工作表"><Svg w={7} h={12}><path d="M0 0v12l7-6z" fill="#bdbdbd" /></Svg></button>
      </div>
      <button className="h-[30px] border-x border-b-3 border-x-[#9b9b9b] border-b-[#217346] bg-white px-[11px] pb-1 text-[#217346]">各项参数计算</button>
      {TABS.map((t) => (
        <div key={t} className="flex h-[30px] items-end">
          <button className="h-full px-3 pb-1.5">{t}</button>
          <div className="h-[26px] w-px bg-[#9b9b9b]" />
        </div>
      ))}
      <button aria-label="新工作表" className="ml-10">
        <Svg w={22} h={22}>
          <circle cx="11" cy="11" r="10" stroke="#777" strokeWidth="1.400" />
          <path d="M11 6v10M6 11h10" stroke="#666" strokeWidth="1.800" />
        </Svg>
      </button>
      <div className="mr-[29px] ml-auto flex items-center">
        <Svg w={3} h={15} className="mr-[18px] shrink-0">
          <path d="M0 0h3v3H0zM0 6h3v3H0zM0 12h3v3H0z" fill="#b1b1b1" />
        </Svg>
        <div className="flex h-[25px] w-[820px] bg-[#dadada]">
          <button aria-label="向左滚动" className="flex w-[25px] items-center justify-center border border-[#777] bg-white">
            <Svg w={6} h={11}><path d="M6 0v11L0 5.500z" fill="#666" /></Svg>
          </button>
          <div className="ml-auto w-[462px] border border-[#777] bg-white" />
          <button aria-label="向右滚动" className="flex w-[25px] items-center justify-center border border-[#777] bg-white">
            <Svg w={6} h={11}><path d="M0 0v11l6-5.500z" fill="#666" /></Svg>
          </button>
        </div>
      </div>
    </div>
  );
}

function StatusBar() {
  return (
    <footer className="relative flex h-[33px] shrink-0 items-center border-b-2 border-[#ebebeb] bg-[#f3f3f3] text-lg leading-6 text-[#262626]">
      <span className="ml-2.5 pb-0.5">就绪</span>
      <button className="ml-7 flex items-center gap-1 pb-0.5">
        <Svg w={22} h={22}>
          <path d="M6 3a9 9 0 00-1 14M9 1v10M5 7l4 4 4-4M9 19c2 1 5 0 6-2" stroke="#444" strokeWidth="1.600" />
          <path d="M12 9c2-3 9-2 8 2-.5 2.500-4 3-4 6M16 19v3" stroke="#444" strokeWidth="2.200" />
        </Svg>
        辅助功能: 不可用
      </button>
      <div className="ml-auto flex h-full items-center">
        <button aria-label="普通" className="flex h-full w-[60px] items-center justify-center bg-[#c6c6c6]">
          <Svg w={19} h={19}><path d="M1 1h17v17H1zM1 7h17M1 12.500h17M7 1v17M12.500 1v17" stroke="#666" strokeWidth="1.200" /></Svg>
        </button>
        <button aria-label="页面布局" className="flex h-full w-[60px] items-center justify-center">
          <Svg w={19} h={19}><path d="M1 1h17v17H1zM4.500 4h10v11h-10zM7 7h5M7 9.500h5M7 12h5" stroke="#666" strokeWidth="1.200" /></Svg>
        </button>
        <button aria-label="分页预览" className="flex h-full w-[60px] items-center justify-center">
          <Svg w={19} h={19}><path d="M1 1h17v17H1zM1 11h12V1M7 1v10" stroke="#666" strokeWidth="1.200" /></Svg>
        </button>
        <button aria-label="缩小" className="ml-2 h-4 w-3"><Svg w={11} h={16}><path d="M0 8h11" stroke="#262626" strokeWidth="1.500" /></Svg></button>
        <input
          type="range"
          aria-label="显示比例"
          min={0}
          max={200}
          defaultValue={100}
          className="mx-2 h-[18px] w-[148px] appearance-none bg-transparent [&::-webkit-slider-runnable-track]:h-0.5 [&::-webkit-slider-runnable-track]:bg-[#262626] [&::-webkit-slider-thumb]:-mt-2 [&::-webkit-slider-thumb]:h-[18px] [&::-webkit-slider-thumb]:w-2 [&::-webkit-slider-thumb]:appearance-none [&::-webkit-slider-thumb]:bg-[#666]"
        />
        <button aria-label="放大" className="h-4 w-3"><Svg w={11} h={16}><path d="M0 8h11M5.500 2.500v11" stroke="#262626" strokeWidth="1.500" /></Svg></button>
        <button className="mr-3 ml-[21px] pb-0.5">100%</button>
      </div>
      <span className="pointer-events-none absolute top-0 right-[11px] text-xl leading-7 whitespace-nowrap text-[#8a8a8a]/80">CSDN @工控老马</span>
    </footer>
  );
}

function LevelMeter() {
  const dim = Array.from({ length: 10 }, (_, i) => i);
  return (
    <div className="absolute top-[812px] left-0 flex h-[87px] w-4 flex-col items-start gap-px rounded-r-sm bg-[#484b5a]/95 pt-2.5 pl-[3px]" aria-hidden="true">
      {dim.map((i) => (
        <span key={i} className="mb-px h-0.5 w-[7px] bg-[#2f323d]" />
      ))}
      {["bg-[#b5c95a]", "bg-[#a3cb62]", "bg-[#8fcb6c]", "bg-[#7bca78]", "bg-[#6ac985]", "bg-[#5dc892]", "bg-[#54c69f]", "bg-[#50c4ab]"].map((c) => (
        <span key={c} className={`mb-px h-0.5 w-1.5 ${c}`} />
      ))}
    </div>
  );
}

export default function App() {
  return (
    <div className={`relative flex h-screen flex-col overflow-hidden bg-[#e6e6e6] ${UI}`}>
      <Header />
      <Ribbon />
      <QuickAccess />
      <FormulaBar />
      <Sheet />
      <SheetTabs />
      <StatusBar />
      <LevelMeter />
    </div>
  );
}
